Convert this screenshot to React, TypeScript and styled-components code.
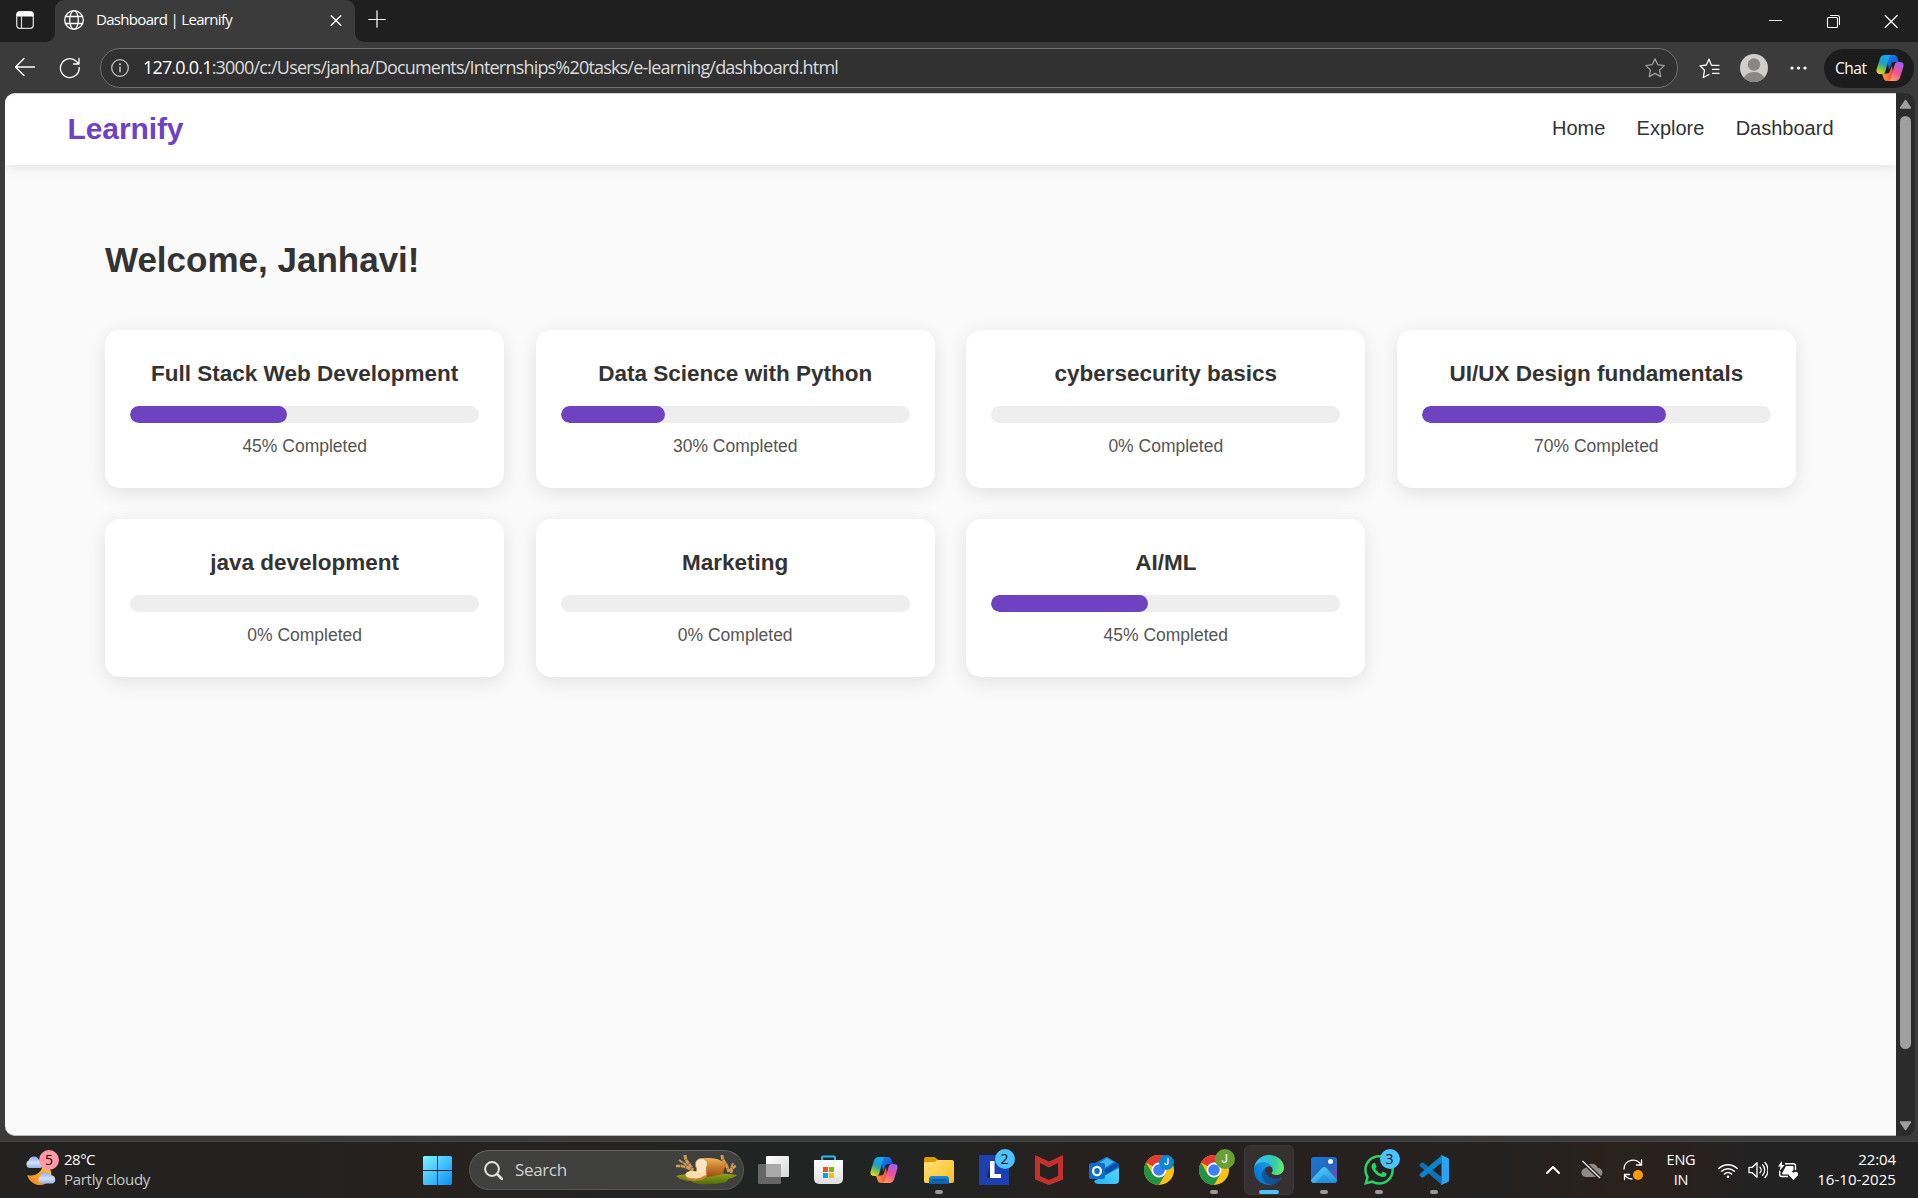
import React from 'react';
import styled, { createGlobalStyle, css } from 'styled-components';

const ui = `"Open Sans", "Noto Sans", sans-serif`;
const arial = `"Liberation Sans", Arial, sans-serif`;

const GlobalStyle = createGlobalStyle`
  * { box-sizing: border-box; }
  html, body { margin: 0; padding: 0; background: #3b3b3b; overflow: hidden; }
  svg { display: block; flex: none; }
  h1, h2, h3, p { margin: 0; }
`;

const Screen = styled.div`
  width: 1918px;
  height: 1198px;
  display: flex;
  flex-direction: column;
  background: #3b3b3b;
  overflow: hidden;
  white-space: nowrap;
`;

/* ---------- browser chrome ---------- */

const TabStrip = styled.div`
  height: 43px;
  display: flex;
  flex: none;
`;

const StripStart = styled.div`
  width: 55px;
  height: 42px;
  background: #1f1f1f;
  border-radius: 0 0 9px 0;
  display: flex;
  padding: 11px 0 0 16px;
`;

const TabSlot = styled.div`
  width: 300px;
  background: linear-gradient(#1f1f1f 0 20px, #3b3b3b 20px);
`;

const Tab = styled.div`
  height: 43px;
  display: flex;
  align-items: center;
  background: #3b3b3b;
  border-radius: 9px 9px 0 0;
  padding: 0 12px 3px 9px;
`;

const TabTitle = styled.span`
  flex: 1;
  margin: -2px 0 0 12px;
  font: 400 15px/20px ${ui};
  letter-spacing: -0.68px;
  color: #fff;
`;

const StripEnd = styled.div`
  flex: 1;
  height: 42px;
  background: #1f1f1f;
  border-radius: 0 0 0 9px;
  display: flex;
  justify-content: space-between;
  padding: 10px 20px 0 13px;
`;

const WindowButtons = styled.div`
  display: flex;
  gap: 44px;
  padding-top: 4px;
`;

const Toolbar = styled.div`
  height: 50px;
  flex: none;
  display: flex;
  align-items: center;
  padding: 0 4px 0 14px;
`;

const NavButtons = styled.div`
  width: 86px;
  display: flex;
  gap: 23px;
`;

const AddressBar = styled.div`
  width: 1578px;
  height: 40px;
  display: flex;
  align-items: center;
  background: #313131;
  border: 1px solid #707070;
  border-radius: 20px;
  padding: 0 11px 0 10px;
`;

const Address = styled.span`
  flex: 1;
  margin: -2px 0 0 14px;
  font: 400 18px/24px ${ui};
  letter-spacing: -0.81px;
  color: #dcdcdc;
`;

const Host = styled.span`
  color: #fff;
`;

const ToolbarEnd = styled.div`
  flex: 1;
  display: flex;
  align-items: center;
  padding-left: 21px;
`;

const AvatarBox = styled.div`
  margin: 0 22px 0 20px;
`;

const ChatPill = styled.div`
  width: 90px;
  height: 39px;
  margin-left: auto;
  display: flex;
  align-items: center;
  justify-content: space-between;
  background: #1c1c1c;
  border-radius: 20px;
  padding: 0 10px 1px 11px;
  font: 400 15.5px/20px ${ui};
  letter-spacing: -0.45px;
  color: #fff;
`;

const Viewport = styled.div`
  height: 1048px;
  flex: none;
  display: flex;
  padding: 0 3px 5px 5px;
`;

const Page = styled.div`
  width: 1891px;
  height: 1043px;
  background: #fafafa;
  border-top: 1px solid #d6d6d6;
  border-bottom: 1px solid #bdbdbd;
  border-radius: 10px 0 0 10px;
  overflow: hidden;
`;

const Scrollbar = styled.div`
  width: 19px;
  height: 1043px;
  background: #2b2b2b;
  border-radius: 0 10px 10px 0;
  display: flex;
  flex-direction: column;
  align-items: center;
  padding: 6px 0 5px;
`;

const Thumb = styled.div`
  width: 11px;
  height: 933px;
  margin: 7px 0 auto;
  border-radius: 6px;
  background: #9f9f9f;
`;

/* ---------- web page ---------- */

const Header = styled.header`
  position: relative;
  height: 71px;
  display: flex;
  align-items: center;
  justify-content: space-between;
  padding: 0 62.5px;
  background: #fff;
  box-shadow: 0 2px 12px rgba(0, 0, 0, 0.1);
`;

const Brand = styled.div`
  font: 700 30px/36px ${arial};
  letter-spacing: -0.1px;
  color: #6f42c1;
  margin-top: -2px;
`;

const Nav = styled.nav`
  display: flex;
  gap: 31.25px;
`;

const NavLink = styled.a`
  font: 400 20px/24px ${arial};
  color: #333;
  margin-top: -3px;
`;

const Main = styled.main`
  padding: 75px 100px;
`;

const Welcome = styled.h1`
  font: 700 35px/40px ${arial};
  color: #333;
`;

const CourseGrid = styled.section`
  margin-top: 50px;
  display: grid;
  grid-template-columns: repeat(4, 1fr);
  gap: 31px 31.25px;
`;

const Card = styled.article`
  height: 158px;
  padding: 31px 25px;
  background: #fff;
  border-radius: 15px;
  box-shadow: 0 5px 19px rgba(0, 0, 0, 0.1);
  text-align: center;
`;

const CourseTitle = styled.h3`
  font: 700 22.5px/26px ${arial};
  color: #333;
`;

const Track = styled.div`
  height: 17px;
  margin-top: 19px;
  background: #eee;
  border-radius: 9px;
  overflow: hidden;
`;

const Fill = styled.div`
  height: 100%;
  background: #6f42c1;
  border-radius: 9px;
`;

const Status = styled.p`
  margin-top: 13px;
  font: 400 17.5px/20px ${arial};
  color: #555;
`;

/* ---------- taskbar ---------- */

const Taskbar = styled.footer`
  height: 57px;
  flex: none;
  display: flex;
  align-items: center;
  border-top: 1px solid #454545;
  background: linear-gradient(90deg, #232221 0%, #232221 14%, #27211e 21%, #252220 28%, #222424 40%, #222424 48%, #26211f 56%, #26211f 74%, #232220 78%, #2b211d 84%, #2a211e 87%, #232222 91%, #222 100%);
  font-family: ${ui};
`;

const Weather = styled.div`
  width: 410px;
  display: flex;
  align-items: center;
  padding: 0 0 2px 24px;
  gap: 5px;
`;

const WeatherText = styled.div`
  font: 400 15px/20px ${ui};
  letter-spacing: -0.3px;
  color: #c9c9c9;
`;

const Strong = styled.div`
  color: #fff;
  letter-spacing: -0.5px;
`;

const SearchBox = styled.div`
  width: 275px;
  height: 40px;
  margin: 0 2px 0 4px;
  display: flex;
  align-items: center;
  padding: 0 6px 0 14px;
  border-radius: 20px;
  background: #40403f;
  border: 1px solid #555;
  border-top-color: #666;
`;

const SearchLabel = styled.span`
  flex: 1;
  margin-left: 12px;
  font: 400 17px/24px ${ui};
  letter-spacing: -0.35px;
  color: #d2d2d2;
`;

const AppButton = styled.div<{ $active?: boolean }>`
  position: relative;
  width: 55px;
  height: 50px;
  display: flex;
  align-items: center;
  justify-content: center;
  ${p => p.$active && css`
    width: 50px;
    margin: 0 2.5px;
    border-radius: 6px;
    background: #363130;
    border: 1px solid #3d3837;
  `}
`;

const Running = styled.i<{ $active?: boolean }>`
  position: absolute;
  bottom: ${p => (p.$active ? 0 : 1)}px;
  left: 50%;
  transform: translateX(-50%);
  width: ${p => (p.$active ? 20 : 8)}px;
  height: 4px;
  border-radius: 2px;
  background: ${p => (p.$active ? '#4cc2ff' : '#9a9a9a')};
`;

const Badge = styled.span<{ $bg?: string; $fg?: string; $small?: boolean }>`
  position: absolute;
  left: ${p => (p.$small ? 28 : 28.5)}px;
  top: ${p => (p.$small ? 10 : 4)}px;
  width: ${p => (p.$small ? 15 : 20)}px;
  height: ${p => (p.$small ? 15 : 20)}px;
  border-radius: 50%;
  text-align: center;
  font: 400 ${p => (p.$small ? 10 : 14)}px/${p => (p.$small ? 15 : 20)}px ${ui};
  background: ${p => p.$bg || '#4cc2ff'};
  color: ${p => p.$fg || '#111'};
`;

const ProfileBadge = styled(Badge)`
  font-family: Roboto, sans-serif;
  font-weight: 500;
  font-size: ${p => (p.$small ? 9 : 12)}px;
`;

const WeatherIcon = styled.div`
  position: relative;
  width: 35px;
  height: 36px;
`;

const WeatherBadge = styled(Badge)`
  left: 15px;
  top: -1px;
`;

const Tray = styled.div`
  flex: 1;
  display: flex;
  align-items: center;
  justify-content: flex-end;
  padding-right: 22px;
  color: #fff;
`;

const TrayIcons = styled.div<{ $gap: number }>`
  display: flex;
  align-items: center;
  gap: ${p => p.$gap}px;
`;

const Language = styled.div`
  width: 40px;
  margin: 0 17px 0 18px;
  text-align: center;
  font: 400 14.5px/20px ${ui};
  letter-spacing: -0.2px;
`;

const Clock = styled.div`
  width: 98px;
  margin-top: -2px;
  text-align: right;
  font: 400 15px/20px ${ui};
  letter-spacing: -0.1px;
`;

const ClockDate = styled.div`
  letter-spacing: 0.05px;
`;

/* ---------- drawings ---------- */

const line = { fill: 'none', stroke: '#fff', strokeWidth: 1.3, strokeLinecap: 'round' as const, strokeLinejoin: 'round' as const };

const CopilotIcon = ({ size, id }: { size: number; id: string }) => (
  <svg width={size} height={size} viewBox="0 0 28 28">
    <defs>
      <linearGradient id={id + 'a'} x1="0.6" y1="0" x2="0.2" y2="1">
        <stop offset="0" stopColor="#16a6f5" /><stop offset=".45" stopColor="#1e9fc0" /><stop offset=".72" stopColor="#7cc14a" /><stop offset="1" stopColor="#ffd21f" />
      </linearGradient>
      <linearGradient id={id + 'b'} x1="0.7" y1="0" x2="0.2" y2="1">
        <stop offset="0" stopColor="#a05cf5" /><stop offset=".5" stopColor="#ee5396" /><stop offset="1" stopColor="#ffa05c" />
      </linearGradient>
      <linearGradient id={id + 'c'} x1="0" y1="0" x2="1" y2="1">
        <stop offset="0" stopColor="#1786f0" /><stop offset="1" stopColor="#1748c9" />
      </linearGradient>
      <linearGradient id={id + 'd'} x1="0" y1="0" x2="1" y2="0">
        <stop offset="0" stopColor="#ff9b3c" /><stop offset="1" stopColor="#f0443e" />
      </linearGradient>
    </defs>
    <path d="M10 1h8c2 0 3 1 3.500 3l1.300 4H18c-2 0-2.600 1-3.200 3l-1.500 5z" fill={`url(#${id}c)`} />
    <path d="M18 27h-7c-2 0-3-1-3.500-3L6 19.500h5c2 0 2.500-1 3-2.500l2-6z" fill={`url(#${id}d)`} />
    <path d="M9 1h7c-1.500 0-2.500 1-3 3L9.500 17c-.6 2-1.500 3-3.500 3H4c-3 0-4.200-2-3.300-5L4 4.500C4.800 2 6.500 1 9 1z" fill={`url(#${id}a)`} />
    <path d="M19 27h-7c1.500 0 2.500-1 3-3l3.500-13c.6-2 1.500-3 3.500-3h2c3 0 4.200 2 3.300 5L24 23.500c-.8 2.500-2.500 3.500-5 3.500z" fill={`url(#${id}b)`} />
  </svg>
);

const ChromeIcon = () => (
  <svg width="30" height="30" viewBox="0 0 30 30">
    <circle cx="15" cy="15" r="15" fill="#fbc116" />
    <path d="M15 15 2 7.500A15 15 0 0 1 28 7.500H15z" fill="#e33b2e" />
    <path d="M2 7.500A15 15 0 0 0 15 30l6.500-11.200L15 15 8.500 18.700z" fill="#229342" />
    <circle cx="15" cy="15" r="7.400" fill="#fff" />
    <circle cx="15" cy="15" r="5.800" fill="#3c7ff0" />
  </svg>
);

const Cloud = ({ x, y, s = 1 }: { x: number; y: number; s?: number }) => (
  <path transform={`translate(${x} ${y}) scale(${s})`} d="M4 11a4 4 0 0 1-.3-7.500A5 5 0 0 1 13 3a4.100 4.100 0 0 1 1.500 8z" fill="url(#cloudFill)" />
);

const BreadArt = () => (
  <svg width="61" height="32" viewBox="0 0 61 32">
    <defs>
      <linearGradient id="crust" x1="0" y1="0" x2="0" y2="1"><stop offset="0" stopColor="#f0b35a" /><stop offset=".5" stopColor="#c87a2a" /><stop offset="1" stopColor="#9a4c12" /></linearGradient>
      <linearGradient id="grass" x1="0" y1="0" x2="0" y2="1"><stop offset="0" stopColor="#93a016" /><stop offset="1" stopColor="#4e6b0b" /></linearGradient>
    </defs>
    <path d="M0 22c7-2 14-2 24-2 14 0 27-1 37 1-3 3-6 3-9 4 1 3-7 5-18 5-11 1-17-1-19-3-6 0-12-2-15-5z" fill="url(#grass)" />
    <g fill="none" stroke="#cf9a52" strokeWidth="3" strokeDasharray="4.500 .5">
      <path d="M9 1c0 4 2 7 4 9l4 6" /><path d="M0 12h6l6 2 5 3" strokeWidth="2.400" /><path d="M3 6l6 4 5 5" strokeWidth="2" />
      <path d="M46 1c0 4 2 7 4 9l3 8" /><path d="M60 12c-3 1-4 3-5 7" strokeWidth="2.400" /><path d="m57 9-3 8" strokeWidth="2" />
    </g>
    <path d="M22 6c3-2 7-2 11-2 10 0 16 4 16 8 0 3-1.500 3-1.500 5v3L31 23l-9-3z" fill="url(#crust)" />
    <path d="M19.500 10c0-3.500 3-5.500 6-5.500s6 2 6 5.500c0 2-1.200 2.200-1.200 4v8.500L20.500 20v-6c-.8-1-1-2-1-4z" fill="#f8e6c2" stroke="#c98135" strokeWidth=".8" />
    <path d="M9.500 20.500c0-2.500 4-4 8-3.500 3 .3 5 1.500 8 1.500 3 0 4.500.5 4.500 2 0 2-2 3-3 4.500-5 1.500-12 1.500-15 0-1.500-1.200-2.500-2.500-2.500-4.500z" fill="#f7dfb0" />
    <path d="M9.500 21c.5 2 3 3 7 3.300 4 .3 8 0 10-1.800l3.300-1.500c0 2-2 3.500-3 4.500-5 1.500-12 1.500-15 0-1.500-1.200-2.300-2.500-2.300-4.500z" fill="#c9812f" />
  </svg>
);

const courses = [
  { title: 'Full Stack Web Development', done: 45 },
  { title: 'Data Science with Python', done: 30 },
  { title: 'cybersecurity basics', done: 0 },
  { title: 'UI/UX Design fundamentals', done: 70 },
  { title: 'java development', done: 0 },
  { title: 'Marketing', done: 0 },
  { title: 'AI/ML', done: 45 },
];

const BrowserTabs = () => (
  <TabStrip>
    <StripStart>
      <svg width="18" height="18" viewBox="0 0 18 18">
        <rect x=".7" y=".7" width="16.600" height="16.600" rx="3" fill="none" stroke="#d8d8d8" strokeWidth="1.300" />
        <path d="M1 5V3.500A2.500 2.500 0 0 1 3.500 1h11A2.500 2.500 0 0 1 17 3.500V5z" fill="#fff" stroke="#fff" />
        <path d="M5.500 5v12" stroke="#d8d8d8" strokeWidth="1.200" />
      </svg>
    </StripStart>
    <TabSlot>
      <Tab>
        <svg width="20" height="20" viewBox="0 0 20 20" {...line}>
          <circle cx="10" cy="10" r="9.300" /><ellipse cx="10" cy="10" rx="4.300" ry="9.300" />
          <path d="M1.500 6.500h17M1.500 13.500h17" />
        </svg>
        <TabTitle>Dashboard | Learnify</TabTitle>
        <svg width="14" height="14" viewBox="0 0 14 14" {...line}><path d="m2.200 2.700 9.600 9.600M11.800 2.700l-9.600 9.600" /></svg>
      </Tab>
    </TabSlot>
    <StripEnd>
      <svg width="18" height="18" viewBox="0 0 18 18" {...line} strokeWidth="1.200"><path d="M9 .8v16.400M.8 9.500h16.400" /></svg>
      <WindowButtons>
        <svg width="14" height="14" viewBox="0 0 14 14" {...line} strokeWidth="1"><path d="M1.500 6.500h12" /></svg>
        <svg width="14" height="14" viewBox="0 0 14 14" {...line} strokeWidth="1.100"><rect x="1.500" y="3.500" width="10" height="10" rx="1" /><path d="M4.500 1.500h7a2 2 0 0 1 2 2v7" /></svg>
        <svg width="14" height="14" viewBox="0 0 14 14" {...line} strokeWidth="1.200"><path d="m1.200 1.500 12 12M13.200 1.500l-12 12" /></svg>
      </WindowButtons>
    </StripEnd>
  </TabStrip>
);

const BrowserToolbar = () => (
  <Toolbar>
    <NavButtons>
      <svg width="22" height="20" viewBox="0 0 22 20" {...line}><path d="M20.500 10H1.500M10 1.500 1.500 10l8.500 8.500" /></svg>
      <svg width="22" height="22" viewBox="0 0 22 22" {...line}><path d="M20.200 10.500A9.400 9.400 0 1 1 17.500 4.500L19.500 6.500M20 1.500v5.500h-5.500" /></svg>
    </NavButtons>
    <AddressBar>
      <svg width="18" height="18" viewBox="0 0 18 18" {...line} stroke="#c4c4c4"><circle cx="9" cy="9" r="8.300" /><path d="M9 8.300v4.500" strokeWidth="1.500" /><circle cx="9" cy="5.300" r=".5" fill="#c4c4c4" /></svg>
      <Address><Host>127.0.0.1</Host>:3000/c:/Users/janha/Documents/Internships%20tasks/e-learning/dashboard.html</Address>
      <svg width="22" height="22" viewBox="0 0 22 22" {...line} stroke="#9c9c9c"><path d="m11 1.800 2.800 5.900 6.400.9-4.700 4.500 1.200 6.500-5.700-3.200-5.700 3.200 1.200-6.500L1.800 8.600l6.400-.9z" /></svg>
    </AddressBar>
    <ToolbarEnd>
      <svg width="21" height="21" viewBox="0 0 21 21" {...line} strokeWidth="1.300">
        <path d="M13.500 7.500 12.300 7 10 1.200 7.300 7 1 7.800l4.500 4.500-1.200 7.200 5.700-3M13.500 7.300h6.500M13.500 11.300h6.500M13.500 15.300h6.500" />
      </svg>
      <AvatarBox>
        <svg width="28" height="28" viewBox="0 0 28 28">
          <clipPath id="avatarClip"><circle cx="14" cy="14" r="14" /></clipPath>
          <g clipPath="url(#avatarClip)"><rect width="28" height="28" fill="#cfcecc" /><circle cx="14" cy="10.500" r="6.200" fill="#8a8683" /><ellipse cx="14" cy="26" rx="10.500" ry="8" fill="#8a8683" /></g>
        </svg>
      </AvatarBox>
      <svg width="17" height="4" viewBox="0 0 17 4" fill="#fff"><circle cx="2" cy="2" r="1.600" /><circle cx="8.500" cy="2" r="1.600" /><circle cx="15" cy="2" r="1.600" /></svg>
      <ChatPill>Chat<CopilotIcon size={28} id="chat" /></ChatPill>
    </ToolbarEnd>
  </Toolbar>
);

const Dashboard = () => (
  <Page>
    <Header>
      <Brand>Learnify</Brand>
      <Nav><NavLink>Home</NavLink><NavLink>Explore</NavLink><NavLink>Dashboard</NavLink></Nav>
    </Header>
    <Main>
      <Welcome>Welcome, Janhavi!</Welcome>
      <CourseGrid>
        {courses.map(c => (
          <Card key={c.title}>
            <CourseTitle>{c.title}</CourseTitle>
            <Track><Fill style={{ width: `${c.done}%` }} /></Track>
            <Status>{c.done}% Completed</Status>
          </Card>
        ))}
      </CourseGrid>
    </Main>
  </Page>
);

const WindowsTaskbar = () => (
  <Taskbar>
    <Weather>
      <WeatherIcon>
        <svg width="35" height="36" viewBox="0 0 35 36">
          <defs>
            <linearGradient id="cloudFill" x1="0" y1="0" x2="0" y2="1"><stop offset="0" stopColor="#89aef0" /><stop offset=".55" stopColor="#d3e0fa" /><stop offset="1" stopColor="#92b2ea" /></linearGradient>
            <linearGradient id="moon" x1="1" y1="0" x2="0" y2="1"><stop offset="0" stopColor="#ffc83d" /><stop offset="1" stopColor="#f08218" /></linearGradient>
          </defs>
          <Cloud x={1} y={5.5} s={1.05} />
          <path d="M3 24c8 2 15-2 16-11 8 3 11 11 6 17-6 7-18 5-22-6z" fill="url(#moon)" />
          <Cloud x={13} y={21} s={1.05} />
        </svg>
        <WeatherBadge $bg="#ff99a4">5</WeatherBadge>
      </WeatherIcon>
      <WeatherText><Strong>28°C</Strong>Partly cloudy</WeatherText>
    </Weather>

    <AppButton>
      <svg width="29" height="29" viewBox="0 0 29 29">
        <linearGradient id="win" gradientUnits="userSpaceOnUse" x1="0" y1="0" x2="29" y2="29"><stop offset="0" stopColor="#7df2ff" /><stop offset=".5" stopColor="#42c2fc" /><stop offset="1" stopColor="#0d8df5" /></linearGradient>
        <path d="M1 0h13v14H0V1zM15 0h13l1 1v13H15zM0 15h14v14H1l-1-1zM15 15h14v13l-1 1H15z" fill="url(#win)" />
      </svg>
    </AppButton>

    <SearchBox>
      <svg width="19" height="19" viewBox="0 0 19 19" fill="none" stroke="#dfe3e6" strokeWidth="2"><circle cx="8" cy="8" r="6.900" /><path d="m13 13 5 5" strokeWidth="2.500" strokeLinecap="round" /></svg>
      <SearchLabel>Search</SearchLabel>
      <BreadArt />
    </SearchBox>

    <AppButton>
      <svg width="31" height="29" viewBox="0 0 31 29">
        <linearGradient id="tv" x1="0" y1="0" x2="1" y2="1"><stop offset="0" stopColor="#fff" /><stop offset="1" stopColor="#d8d8d8" /></linearGradient>
        <rect x="8" y="0" width="23" height="21" rx="1" fill="url(#tv)" />
        <rect x="0" y="8" width="23" height="20" rx="1" fill="#666" />
        <path d="M8 8h15v13H8z" fill="#a8a8a8" />
      </svg>
    </AppButton>
    <AppButton>
      <svg width="29" height="30" viewBox="0 0 29 30">
        <linearGradient id="bag" x1="0" y1="0" x2="0" y2="1"><stop offset="0" stopColor="#fff" /><stop offset="1" stopColor="#dedede" /></linearGradient>
        <path d="M8 6V2.500A1 1 0 0 1 9 1.500h11a1 1 0 0 1 1 1V6" fill="none" stroke="#27b9ea" strokeWidth="2" />
        <path d="M0 6c0-1 0-1 1-1h27c1 0 1 0 1 1v18a5 5 0 0 1-5 5H5a5 5 0 0 1-5-5z" fill="url(#bag)" />
        <path d="M9 12h5v5H9z" fill="#f25022" /><path d="M15 12h5v5h-5z" fill="#7fba00" /><path d="M9 18h5v5H9z" fill="#00a4ef" /><path d="M15 18h5v5h-5z" fill="#ffb900" />
      </svg>
    </AppButton>
    <AppButton><CopilotIcon size={28} id="task" /></AppButton>
    <AppButton>
      <svg width="30" height="27" viewBox="0 0 30 27">
        <linearGradient id="folder" x1="0" y1="0" x2="1" y2="1"><stop offset="0" stopColor="#ffe07a" /><stop offset="1" stopColor="#fdbf1c" /></linearGradient>
        <linearGradient id="dock" x1="0" y1="0" x2="0" y2="1"><stop offset="0" stopColor="#1a8ce0" /><stop offset="1" stopColor="#0b5ba6" /></linearGradient>
        <path d="M0 2a2 2 0 0 1 2-2h8c2 0 3 3 5 3h13v8H0z" fill="#dc9a05" />
        <path d="M0 7c0-2 1-2 3-2h7c2 0 2-2 4-2h14a2 2 0 0 1 2 2v19a2 2 0 0 1-2 2H2a2 2 0 0 1-2-2z" fill="url(#folder)" />
        <path d="M5 27v-5a3 3 0 0 1 3-3h14a3 3 0 0 1 3 3v5z" fill="url(#dock)" />
        <path d="M8 23h14" stroke="#0a4c8e" strokeWidth="1.200" />
      </svg>
      <Running />
    </AppButton>
    <AppButton>
      <svg width="30" height="30" viewBox="0 0 30 30">
        <path d="M0 0h30v30H0z" fill="#1d3fb0" /><path d="M12 7 8 22l3 1h6z" fill="#0b2a55" /><path d="M11 6h4.500v13H22v4H11z" fill="#fff" />
      </svg>
      <Badge>2</Badge>
    </AppButton>
    <AppButton>
      <svg width="28" height="30" viewBox="0 0 28 30">
        <path d="M0 0 14 6.500 28 0v24.500L14 30 0 24.500zM5 8v13l9 4 9-4V8l-9 4.500z" fill="#c4302d" fillRule="evenodd" />
      </svg>
    </AppButton>
    <AppButton>
      <svg width="30" height="27" viewBox="0 0 30 27">
        <linearGradient id="mail" x1="0" y1="1" x2="1" y2="0"><stop offset="0" stopColor="#23b3f1" /><stop offset="1" stopColor="#5ad8fd" /></linearGradient>
        <path d="M5 8c0-1 1-2 2-2.600L16 .5c1.300-.7 2.200-.6 3.300 0L29 6.500c1 .7 1 1.500 1 2.500v13H5z" fill="#1177d1" />
        <path d="m9 7 9-6 7 4-14 9z" fill="#46b6ef" />
        <path d="m12 15 15-9.500c2 1 3 2 3 3.500L14 20z" fill="#0b50a8" />
        <path d="M30 11v12a4 4 0 0 1-4 4H9c-2 0-3.500-1-4-3z" fill="url(#mail)" />
        <rect y="6" width="16" height="16" rx="2" fill="#0f6fc8" /><ellipse cx="8" cy="14" rx="3.900" ry="4.200" fill="none" stroke="#fff" strokeWidth="2.200" />
      </svg>
    </AppButton>
    <AppButton><ChromeIcon /><ProfileBadge $bg="#0b86d0" $fg="#fff" $small>J</ProfileBadge></AppButton>
    <AppButton><ChromeIcon /><ProfileBadge $bg="#689f38" $fg="#e4f0d8">J</ProfileBadge><Running /></AppButton>
    <AppButton $active>
      <svg width="30" height="30" viewBox="0 0 256 256">
        <defs>
          <linearGradient id="edgeA" x1="63" y1="178" x2="241" y2="178" gradientUnits="userSpaceOnUse"><stop offset="0" stopColor="#0c59a4" /><stop offset="1" stopColor="#114a8b" /></linearGradient>
          <linearGradient id="edgeB" x1="157" y1="99" x2="46" y2="221" gradientUnits="userSpaceOnUse"><stop offset="0" stopColor="#1b9de2" /><stop offset=".2" stopColor="#1595df" /><stop offset=".7" stopColor="#0680d7" /><stop offset="1" stopColor="#0078d4" /></linearGradient>
          <radialGradient id="edgeC" cx="26" cy="47" r="230" gradientUnits="userSpaceOnUse"><stop offset="0" stopColor="#35c1f1" /><stop offset=".35" stopColor="#2fc3df" /><stop offset=".65" stopColor="#36c9a4" /><stop offset="1" stopColor="#66eb6e" /></radialGradient>
        </defs>
        <path d="M231 190.500c-3.400 1.800-6.900 3.400-10.500 4.700a101.900 101.900 0 0 1-35.900 6.500c-47.300 0-88.500-32.500-88.500-74.300a31.500 31.500 0 0 1 16.400-27.300c-42.800 1.800-53.800 46.400-53.800 72.500 0 73.900 68.100 81.400 82.800 81.400 7.900 0 19.800-2.300 27-4.600l1.300-.4a128.300 128.300 0 0 0 66.600-52.800 4 4 0 0 0-5.400-5.700z" fill="url(#edgeA)" />
        <path d="M105.700 241.400a79.200 79.200 0 0 1-22.700-21.300 80.700 80.700 0 0 1 29.500-120c3.200-1.500 8.500-4.100 15.600-4a32.400 32.400 0 0 1 25.700 13 31.900 31.900 0 0 1 6.300 18.700c0-.2 24.500-79.600-80-79.600-43.900 0-80 41.600-80 78.200a130.200 130.200 0 0 0 12.100 56 128 128 0 0 0 156.400 67 75.500 75.500 0 0 1-62.800-8z" fill="url(#edgeB)" />
        <path d="M152.300 148.900c-.8 1-3.300 2.500-3.300 5.700 0 2.600 1.700 5.100 4.700 7.200 14.400 10 41.500 8.700 41.600 8.700a59.600 59.600 0 0 0 30.300-8.300 61.400 61.400 0 0 0 30.400-52.900c.3-22.400-8-37.300-11.300-43.900C223.500 23.900 177.700 0 128 0A128 128 0 0 0 0 126.200c.5-36.500 36.800-66 80-66 3.500 0 23.500.3 42 10 16.300 8.600 24.900 19 30.800 29.200 6.200 10.700 7.300 24.100 7.300 29.500 0 5.300-2.700 13.300-7.800 20z" fill="url(#edgeC)" />
      </svg>
      <Running $active />
    </AppButton>
    <AppButton>
      <svg width="26" height="26" viewBox="0 0 26 26">
        <defs>
          <linearGradient id="photo" x1="0" y1="0" x2="1" y2="1"><stop offset="0" stopColor="#137ad0" /><stop offset=".55" stopColor="#2866bd" /><stop offset="1" stopColor="#8a48aa" /></linearGradient>
          <linearGradient id="hill" x1="0" y1="0" x2="1" y2="1"><stop offset="0" stopColor="#5ad6fb" /><stop offset="1" stopColor="#1489dc" /></linearGradient>
          <clipPath id="photoClip"><rect width="26" height="26" rx="3" /></clipPath>
        </defs>
        <g clipPath="url(#photoClip)"><rect width="26" height="26" fill="url(#photo)" /><path d="M-1 24 11 11c1.500-1.500 3-1.500 4.500 0L28 25v3H-1z" fill="url(#hill)" /><path d="m4 26 9-9 9 9z" fill="#127bcf" opacity=".45" /></g>
        <circle cx="19.500" cy="4.600" r="2.500" fill="#f4f8ff" />
      </svg>
      <Running />
    </AppButton>
    <AppButton>
      <svg width="30" height="30" viewBox="0 0 24 24" fill="#25d366"><path d="M17.472 14.382c-.297-.149-1.758-.867-2.030-.967-.273-.099-.471-.148-.67.150-.197.297-.767.966-.94 1.164-.173.199-.347.223-.644.075-.297-.150-1.255-.463-2.390-1.475-.883-.788-1.480-1.761-1.653-2.059-.173-.297-.018-.458.130-.606.134-.133.298-.347.446-.520.149-.174.198-.298.298-.497.099-.198.050-.371-.025-.520-.075-.149-.669-1.612-.916-2.207-.242-.579-.487-.500-.669-.510-.173-.008-.371-.010-.570-.010-.198 0-.520.074-.792.372-.272.297-1.040 1.016-1.040 2.479 0 1.462 1.065 2.875 1.213 3.074.149.198 2.096 3.200 5.077 4.487.709.306 1.262.489 1.694.625.712.227 1.360.195 1.871.118.571-.085 1.758-.719 2.006-1.413.248-.694.248-1.289.173-1.413-.074-.124-.272-.198-.570-.347m-5.421 7.403h-.004a9.870 9.870 0 0 1-5.031-1.378l-.361-.214-3.741.982.998-3.648-.235-.374a9.860 9.860 0 0 1-1.510-5.260c.001-5.450 4.436-9.884 9.888-9.884 2.640 0 5.122 1.030 6.988 2.898a9.825 9.825 0 0 1 2.893 6.994c-.003 5.450-4.437 9.884-9.885 9.884m8.413-18.297A11.815 11.815 0 0 0 12.050 0C5.495 0 .160 5.335.157 11.892c0 2.096.547 4.142 1.588 5.945L.057 24l6.305-1.654a11.882 11.882 0 0 0 5.683 1.448h.005c6.554 0 11.890-5.335 11.893-11.893a11.821 11.821 0 0 0-3.480-8.413z" /></svg>
      <Badge>3</Badge>
      <Running />
    </AppButton>
    <AppButton>
      <svg width="30" height="30" viewBox="0 0 30 30">
        <path d="m1 9 1.500-1.200c.7-.5 1.300-.4 1.900 0L22.500 22v7.500L1 11.200C.2 10.400.2 9.700 1 9z" fill="#1070b3" />
        <path d="m1 21 1.500 1.300c.7.500 1.300.4 1.900 0L22.500 8V.500L1 18.800c-.8.800-.8 1.500 0 2.200z" fill="#0c82ca" />
        <path d="M22.500 0 29 3c.7.400 1 .9 1 1.600v20.800c0 .7-.3 1.200-1 1.600l-6.500 3c-1 0-1.500-.4-1.500-.4.900.4 1.500-.3 1.500-1.100V1.500c0-.8-.7-1.600-1.500-1.100 0 0 .5-.4 1.500-.4z" fill="#2ba3f3" />
      </svg>
      <Running />
    </AppButton>

    <Tray>
      <TrayIcons $gap={20}>
        <svg width="16" height="12" viewBox="0 0 16 12" {...line} strokeWidth="2"><path d="m2 9 6-6 6 6" /></svg>
        <svg width="22" height="20" viewBox="0 0 22 20"><path d="M5 17a4.500 4.500 0 0 1-.3-9 6.500 6.500 0 0 1 12.200 0A4.500 4.500 0 0 1 17 17z" fill="#8d8a89" /><path d="m1.500 1 17.500 17" stroke="#2a211e" strokeWidth="4" /><path d="m1.500 1 17.500 17" stroke="#e6e6e6" strokeWidth="1.400" /></svg>
        <svg width="20" height="22" viewBox="0 0 20 22" {...line}><path d="M1 10a9 9 0 0 1 17-4M18.500 1v5h-5M9 20a9 9 0 0 1-7.500-4.500M1.500 20.500v-5h5" /><circle cx="15" cy="16" r="5" fill="#ff9a0d" stroke="none" /></svg>
      </TrayIcons>
      <Language>ENG<br />IN</Language>
      <TrayIcons $gap={10}>
        <svg width="20" height="17" viewBox="0 0 20 17" {...line} strokeWidth="1.500"><path d="M.8 6.500a13 13 0 0 1 18.400 0M3.600 9.300a9 9 0 0 1 12.800 0M6.400 12a5 5 0 0 1 7.200 0" /><circle cx="10" cy="14.800" r="1.300" fill="#fff" stroke="none" /></svg>
        <svg width="20" height="18" viewBox="0 0 20 18" {...line} strokeWidth="1.300"><path d="M1 6.300h3.300L9 1.800v14.400l-4.700-4.500H1zM12 6.200a4 4 0 0 1 0 5.600M14.600 3.800a7.500 7.500 0 0 1 0 10.400M17 1.500a10.800 10.800 0 0 1 0 15" /></svg>
        <svg width="20" height="19" viewBox="0 0 20 19"><path d="M7 2.700h8.500a2 2 0 0 1 2 2V9M1.700 10v3.500a2 2 0 0 0 2 2H10" fill="none" stroke="#fff" strokeWidth="1.400" /><path d="M8 5h6.500a1 1 0 0 1 1 1v3L11 13.500H5a1 1 0 0 1-.8-1.500z" fill="#fff" /><path d="M4 0 0 5.500h2.500L1.500 10 6.500 4H4z" fill="#fff" /><path d="m15.500 19-4.200-4.200a2.400 2.400 0 0 1 0-3.300c1.200-1.200 3-1 4.200.3 1.200-1.300 3-1.500 4-.3.900 1 .9 2.300 0 3.300z" fill="#fff" /></svg>
      </TrayIcons>
      <Clock>22:04<ClockDate>16-10-2025</ClockDate></Clock>
    </Tray>
  </Taskbar>
);

export default function App() {
  return (
    <Screen>
      <GlobalStyle />
      <BrowserTabs />
      <BrowserToolbar />
      <Viewport>
        <Dashboard />
        <Scrollbar>
          <svg width="13" height="10" viewBox="0 0 13 10"><path d="M6.500 1.500 11.500 9h-10z" fill="#9f9f9f" stroke="#9f9f9f" strokeWidth="1.500" strokeLinejoin="round" /></svg>
          <Thumb />
          <svg width="13" height="10" viewBox="0 0 13 10"><path d="M6.500 8.500 11.500 1h-10z" fill="#9f9f9f" stroke="#9f9f9f" strokeWidth="1.500" strokeLinejoin="round" /></svg>
        </Scrollbar>
      </Viewport>
      <WindowsTaskbar />
    </Screen>
  );
}
